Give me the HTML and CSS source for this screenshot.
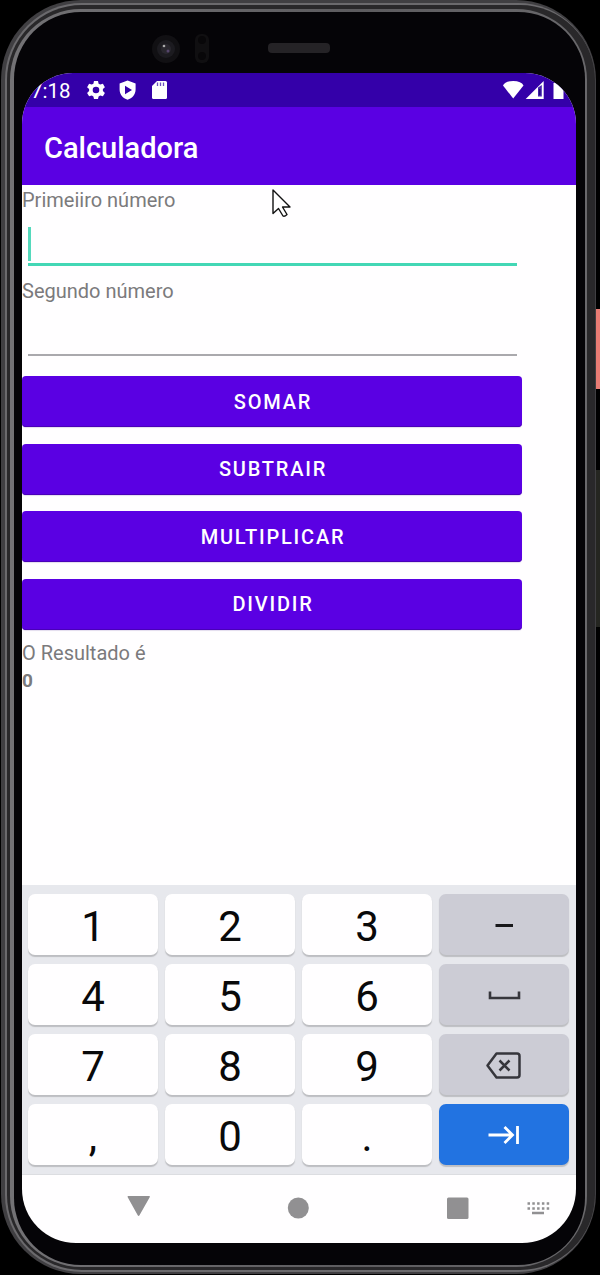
FILE: index.html
```html
<!DOCTYPE html>
<html lang="pt-BR">
<head>
<meta charset="utf-8">
<title>Calculadora</title>
<link rel="stylesheet" href="styles.css">
</head>
<body>
<div class="stage">
  <i class="side power"></i><i class="side volume"></i>
  <div class="phone"><div class="rim"><div class="groove"><div class="lip">
    <div class="bezel">
      <svg class="sensors" width="554" height="61" viewBox="22 12 554 61">
        <circle cx="166" cy="49" r="14" fill="#111013"/><circle cx="166" cy="49" r="9" fill="#1c1b20"/><circle cx="166" cy="49" r="5" fill="#29272e"/><circle cx="164" cy="46" r="1.3" fill="#aaa"/><circle cx="168" cy="51" r="1.5" fill="#55456b"/>
        <rect x="195" y="34" width="14" height="29" rx="6" fill="#100f11"/><circle cx="202" cy="40" r="4" fill="#080709"/><circle cx="202" cy="56" r="4" fill="#080709"/>
        <rect x="268" y="43" width="62" height="10" rx="4" fill="#252326"/>
      </svg>
      <main class="screen">
        <div class="status">
          <span class="clock">7:18</span>
          <svg class="status-left" width="90" height="24" viewBox="84 78 90 24" fill="#fff">
            <path fill-rule="evenodd" d="M94 81h4l.6 2.7 1.6.9 2.7-.8 2 3.4-2 1.9v1.9l2 1.9-2 3.4-2.7-.8-1.6.9L98 99h-4l-.6-2.6-1.6-.9-2.7.8-2-3.4 2-1.9v-1.9l-2-1.9 2-3.4 2.7.8 1.6-.9zM96 86.700a3.300 3.300 0 1 0 0 6.600a3.300 3.300 0 0 0 0-6.600z"/>
            <path fill-rule="evenodd" d="M127.600 80.500l8 3v6c0 5-3.300 8.700-8 10.200-4.700-1.500-8-5.200-8-10.200v-6zM125 85.700v8.600l7-4.300z"/>
            <path fill-rule="evenodd" d="M157 81h8.500q1.500 0 1.500 1.500v15q0 1.500-1.500 1.500h-12q-1.500 0-1.500-1.500V86z"/>
            <path d="M157.500 82.500v3.500M160.500 82.500v3.500M163.500 82.500v3.500" stroke="#6c4fc0" stroke-width="1.300"/>
          </svg>
          <svg class="status-right" width="76" height="26" viewBox="500 78 76 26" fill="#fff">
            <path d="M503 85.500Q505 81 513.200 81T523.500 85.500L513.200 98.500z"/>
            <path d="M543.700 81v18h-18z"/><path d="M538 87.500l3.800-2.500v11.500h-3.800z" fill="#4a22b2"/><path d="M539.700 89v6" stroke="#1c0a78" stroke-width="1.600"/>
            <path d="M553.500 83h10v16h-10z"/>
          </svg>
        </div>
        <header class="appbar">Calculadora</header>
        <section class="content">
          <div class="label">Primeiiro número</div>
          <div class="field active"><i></i></div>
          <div class="label second">Segundo número</div>
          <div class="field"></div>
          <div class="buttons">
            <button>SOMAR</button><button>SUBTRAIR</button><button>MULTIPLICAR</button><button>DIVIDIR</button>
          </div>
          <div class="result">O Resultado é<b>0</b></div>
        </section>
        <section class="keys">
          <span>1</span><span>2</span><span>3</span>
          <span class="fn"><svg width="40" height="30" viewBox="0 0 40 30"><path d="M11.500 15.500h17.500" stroke="#18181b" stroke-width="3"/></svg></span>
          <span>4</span><span>5</span><span>6</span>
          <span class="fn"><svg width="40" height="30" viewBox="0 0 40 30"><path d="M6 11.500v6.500h29v-6.500" fill="none" stroke="#36363c" stroke-width="2.600"/></svg></span>
          <span>7</span><span>8</span><span>9</span>
          <span class="fn"><svg width="40" height="30" viewBox="0 0 40 30" fill="none" stroke="#36363c" stroke-width="2.500" stroke-linejoin="round"><path d="M12.500 3.500H33q2.500 0 2.500 2.500v19q0 2.500-2.500 2.500H12.500L3.500 15.500zM15.500 10.500l10 10m0-10l-10 10"/></svg></span>
          <span>,</span><span>0</span><span>.</span>
          <span class="next"><svg width="40" height="30" viewBox="0 0 40 30" fill="none" stroke="#fff" stroke-width="2.800"><path d="M4.500 15h24M20.500 7l8 8-8 8M33.500 6v18"/></svg></span>
        </section>
        <nav class="nav">
          <svg width="554" height="68" viewBox="22 1175 554 68" fill="#919092">
            <path d="M128.500 1196h20.500q1.500 0 .7 1.300l-10.200 18q-.9 1.400-1.800 0l-10-18q-.7-1.300.8-1.300z"/>
            <circle cx="298.300" cy="1208" r="10.500"/><rect x="447" y="1197.500" width="21.500" height="21.500" rx="1.500"/>
            <path d="M527.500 1203.500h22M527.500 1208.500h22" stroke="#919092" stroke-width="2.500" stroke-dasharray="2.500 2.300"/><path d="M532 1211.800h12v2.400h-12z"/>
          </svg>
        </nav>
      </main>
    </div>
  </div></div></div></div>
  <svg class="cursor" width="22" height="32" viewBox="0 0 22 32"><path d="M2 2v23.500l5.500-5 4.500 7.500q1.500 1 4-1.500l-4.500-7.500H19z" fill="#fff" stroke="#111" stroke-width="1.400" stroke-linejoin="round"/></svg>
</div>
</body>
</html>
```
FILE: styles.css
```css
* { box-sizing: border-box; }
body { margin: 0; background: #000; font-family: Roboto, sans-serif; }
.stage { position: relative; width: 600px; height: 1275px; overflow: hidden; }
.side { position: absolute; right: 0; width: 5px; }
.power { top: 309px; height: 80px; background: #e97c74; }
.volume { top: 470px; height: 157px; background: #252621; border-left: 1px solid #111; }
.phone { position: relative; width: 595px; height: 1274px; margin-left: 1px; padding: 3px 1px 2px 4px; border-radius: 80px; background: #403f42; }
.rim { padding: 2px 0 2px 2px; border-radius: 77px; background: #6b6a6d; }
.groove { padding: 4px 8px 3px 3px; border-radius: 75px; background: #29282a; }
.lip { padding: 3px 2px 2px 4px; border-radius: 71px; background: linear-gradient(90deg, #737275, #5d5c5f 60%, #69686b); }
.bezel { height: 1253px; padding: 0 9px 0 8px; border-radius: 67px; background: #050407; }
.sensors { display: block; }
.screen { display: flex; flex-direction: column; width: 554px; height: 1170px; border-radius: 51px 51px 54px 54px; overflow: hidden; background: #fffeff; }
.status { display: flex; align-items: flex-start; height: 34px; padding-top: 5px; background: #3400a9; color: #fff; }
.clock { width: 62px; padding-left: 9px; font-size: 20.5px; line-height: 26px; }
.status-right { margin-left: auto; }
.appbar { height: 78px; padding-left: 22px; background: #5a00e3; color: #fff; font-size: 29px; font-weight: 500; line-height: 83px; }
.content { height: 700px; color: #7b7a7c; font-size: 20px; }
.label { height: 36px; line-height: 31px; }
.field { width: 489px; height: 46px; margin-left: 6px; border-bottom: 2px solid #aaa9ad; }
.active { height: 45px; border-bottom: 3px solid #43d7b5; padding-top: 6px; }
.active i { display: block; width: 3px; height: 34px; background: #55d9bc; }
.second { height: 44px; line-height: 50px; }
.buttons { display: flex; flex-direction: column; gap: 16.6px; width: 500px; margin-top: 20px; }
button { height: 51px; padding: 0 0 0 2px; border: 0; border-radius: 4px; background: #5a00e3; color: #fff; font: 500 20px Roboto, sans-serif; letter-spacing: 1.8px; box-shadow: inset 0 -1px #4a00b8, 0 1px 1px #e3dcee; }
.result { padding-top: 10px; line-height: 27px; }
.result b { display: block; font-size: 19px; }
.keys { height: 290px; padding: 9px 7px 9px 6px; display: grid; grid-template-columns: repeat(4, 130px); grid-auto-rows: 61px; gap: 9px 7px; background: #e7e8ed; border-bottom: 1px solid #dcdde1; }
.keys span { display: flex; align-items: center; justify-content: center; padding-top: 3px; border-radius: 7px; background: #fffeff; box-shadow: 0 1.500px 1px #bdbec2; font-size: 42px; color: #09090a; }
.keys .fn { background: #ccccd5; padding: 0; }
.keys .next { background: #2273e1; padding: 0; }
.nav svg { display: block; }
.cursor { position: absolute; left: 271px; top: 188px; }
```
